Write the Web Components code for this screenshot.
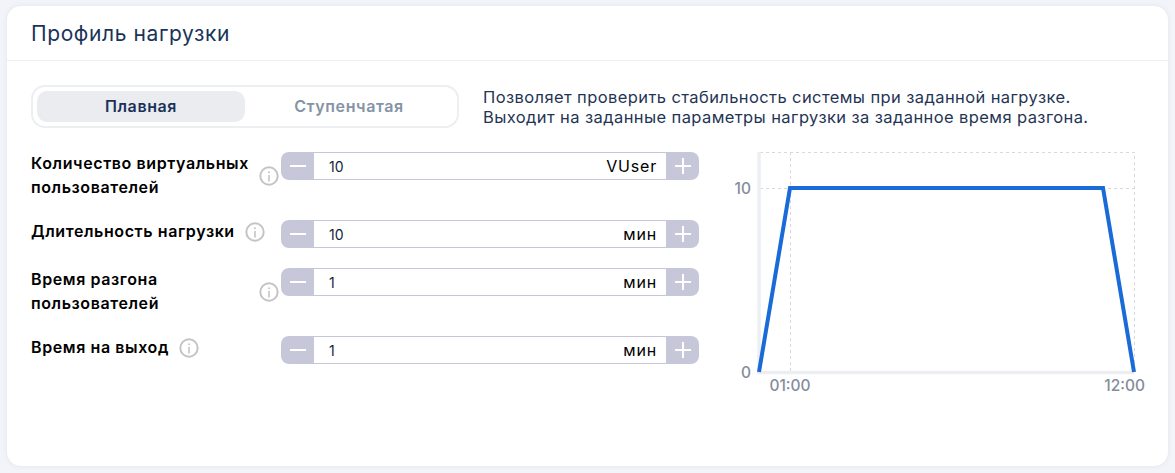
<!DOCTYPE html>
<html lang="ru">
<head>
<meta charset="utf-8">
<title>Профиль нагрузки</title>
<style>
  html, body { margin: 0; height: 100%; background: #f2f4f9; }
  body { font-family: Inter, "Noto Sans", sans-serif; overflow: hidden; }
</style>
</head>
<body>
<profile-card heading="Профиль нагрузки">
  <mode-toggle slot="top" active="Плавная" other="Ступенчатая"></mode-toggle>
  <span slot="hint">Позволяет проверить стабильность системы при заданной нагрузке.<br>Выходит на заданные параметры нагрузки за заданное время разгона.</span>
  <param-row slot="form" value="10" unit="VUser" label-width="218">Количество виртуальных пользователей</param-row>
  <param-row slot="form" value="10" unit="мин">Длительность нагрузки</param-row>
  <param-row slot="form" value="1" unit="мин" label-width="218">Время разгона пользователей</param-row>
  <param-row slot="form" value="1" unit="мин">Время на выход</param-row>
  <load-chart slot="chart"></load-chart>
</profile-card>

<script>
  class ProfileCard extends HTMLElement {
    constructor() {
      super();
      this.attachShadow({ mode: 'open' });
    }

    connectedCallback() {
      this.shadowRoot.innerHTML = `
        <style>
          :host {
            display: block;
            margin: 6px 7px 7px;
            height: 460px;
            background: #fff;
            border-radius: 14px;
            box-shadow: 0 0 4px rgba(200, 206, 222, .45);
            color: #000;
          }
          header {
            height: 55px;
            box-sizing: border-box;
            padding-left: 24px;
            border-bottom: 1px solid #eceef2;
            display: flex;
            align-items: center;
            font-size: 21px;
            letter-spacing: .6px;
            color: #1b3358;
          }
          .top {
            display: flex;
            align-items: center;
            gap: 24px;
            padding: 24px 0 0 24px;
          }
          .hint {
            font-size: 16.5px;
            line-height: 20px;
            letter-spacing: .4px;
            white-space: nowrap;
            color: #1f3554;
          }
          .main {
            display: flex;
            padding: 24px 0 0 24px;
          }
          .form {
            width: 668px;
            display: grid;
            gap: 20px;
            align-content: start;
          }
          .chart { margin: -4px 0 0 21px; }
        </style>
        <header>${this.getAttribute('heading')}</header>
        <div class="top">
          <slot name="top"></slot>
          <div class="hint"><slot name="hint"></slot></div>
        </div>
        <div class="main">
          <div class="form"><slot name="form"></slot></div>
          <div class="chart"><slot name="chart"></slot></div>
        </div>
      `;
    }
  }

  class ModeToggle extends HTMLElement {
    constructor() {
      super();
      this.attachShadow({ mode: 'open' });
    }

    connectedCallback() {
      this.shadowRoot.innerHTML = `
        <style>
          :host {
            display: grid;
            grid-template-columns: 208px 208px;
            flex: none;
            box-sizing: border-box;
            width: 428px;
            height: 43px;
            padding: 4px;
            border: 2px solid #eceef2;
            border-radius: 14px;
            font-size: 16px;
            font-weight: 600;
            letter-spacing: .6px;
          }
          div {
            display: flex;
            align-items: center;
            justify-content: center;
            padding-bottom: 1px;
            border-radius: 10px;
            color: #8593a6;
          }
          .on { background: #ebecf0; color: #1b3358; }
        </style>
        <div class="on">${this.getAttribute('active')}</div>
        <div>${this.getAttribute('other')}</div>
      `;
    }
  }

  class InfoIcon extends HTMLElement {
    constructor() {
      super();
      this.attachShadow({ mode: 'open' });
      this.shadowRoot.innerHTML = `
        <style>
          :host { display: block; width: 20px; height: 20px; flex: none; }
          svg { display: block; }
        </style>
        <svg width="20" height="20" viewBox="0 0 20 20" fill="none" aria-hidden="true">
          <circle cx="10" cy="10" r="8.7" stroke="#c4c4c4" stroke-width="2"/>
          <path d="M10 9v6.4" stroke="#c4c4c4" stroke-width="1.6"/>
          <circle cx="10" cy="6.2" r="1" fill="#c4c4c4"/>
        </svg>
      `;
    }
  }

  class NumStepper extends HTMLElement {
    constructor() {
      super();
      this.attachShadow({ mode: 'open' });
    }

    connectedCallback() {
      this.shadowRoot.innerHTML = `
        <style>
          :host {
            display: flex;
            box-sizing: border-box;
            width: 418px;
            height: 28px;
            flex: none;
            border-radius: 8px;
            overflow: hidden;
            font-size: 16px;
            color: #000;
          }
          .btn {
            width: 33px;
            flex: none;
            background: #c6c8da;
            display: flex;
            align-items: center;
            justify-content: center;
          }
          .field {
            flex: 1;
            display: flex;
            align-items: center;
            justify-content: space-between;
            padding: 0 9px 0 15px;
            border-top: 1px solid #c6c8da;
            border-bottom: 1px solid #c6c8da;
          }
          .value { color: #14233c; font-size: 14px; }
          .unit { letter-spacing: .8px; }
          svg { display: block; }
        </style>
        <div class="btn">
          <svg width="18" height="18" viewBox="0 0 18 18"><path d="M1 9h16" stroke="#fff" stroke-width="2"/></svg>
        </div>
        <div class="field">
          <span class="value">${this.getAttribute('value')}</span>
          <span class="unit">${this.getAttribute('unit')}</span>
        </div>
        <div class="btn">
          <svg width="18" height="18" viewBox="0 0 18 18"><path d="M1 9h16M9 1v16" stroke="#fff" stroke-width="2"/></svg>
        </div>
      `;
    }
  }

  class ParamRow extends HTMLElement {
    constructor() {
      super();
      this.attachShadow({ mode: 'open' });
    }

    connectedCallback() {
      const width = this.getAttribute('label-width');
      this.shadowRoot.innerHTML = `
        <style>
          :host {
            display: flex;
            justify-content: space-between;
            align-items: flex-start;
          }
          .label {
            display: flex;
            align-items: center;
            gap: 10px;
          }
          .text {
            ${width ? `width: ${width}px;` : ''}
            margin: -1px 0 1px;
            font-size: 16px;
            font-weight: 600;
            line-height: 24px;
            letter-spacing: .6px;
          }
        </style>
        <div class="label">
          <div class="text"><slot></slot></div>
          <info-icon></info-icon>
        </div>
        <num-stepper value="${this.getAttribute('value')}" unit="${this.getAttribute('unit')}"></num-stepper>
      `;
    }
  }

  class LoadChart extends HTMLElement {
    constructor() {
      super();
      this.attachShadow({ mode: 'open' });
      // viewBox is in page coordinates, easier to compare with the screenshot
      this.shadowRoot.innerHTML = `
        <style>
          :host { display: block; width: 430px; height: 250px; }
          svg { display: block; }
          text { font-size: 15.5px; font-weight: 500; fill: #858c9c; }
        </style>
        <svg width="430" height="250" viewBox="720 148 430 250">
          <g stroke="#d6d8de" stroke-width="1" stroke-dasharray="3 3" fill="none">
            <path d="M760 152.5H1134.5V372"/>
            <path d="M760 188.5H1134"/>
            <path d="M790.5 152V372"/>
          </g>
          <path d="M759 152V374M757 372.5H1134" stroke="#eceef2" stroke-width="3.5" fill="none"/>
          <path d="M759 372L790 188H1103L1134 372" stroke="#1a6ad8" stroke-width="4" fill="none"/>
          <text x="751" y="194" text-anchor="end">10</text>
          <text x="751" y="378" text-anchor="end">0</text>
          <text x="790" y="391" text-anchor="middle">01:00</text>
          <text x="1145" y="391" text-anchor="end">12:00</text>
        </svg>
      `;
    }
  }

  customElements.define('info-icon', InfoIcon);
  customElements.define('num-stepper', NumStepper);
  customElements.define('param-row', ParamRow);
  customElements.define('mode-toggle', ModeToggle);
  customElements.define('load-chart', LoadChart);
  customElements.define('profile-card', ProfileCard);
</script>
</body>
</html>
